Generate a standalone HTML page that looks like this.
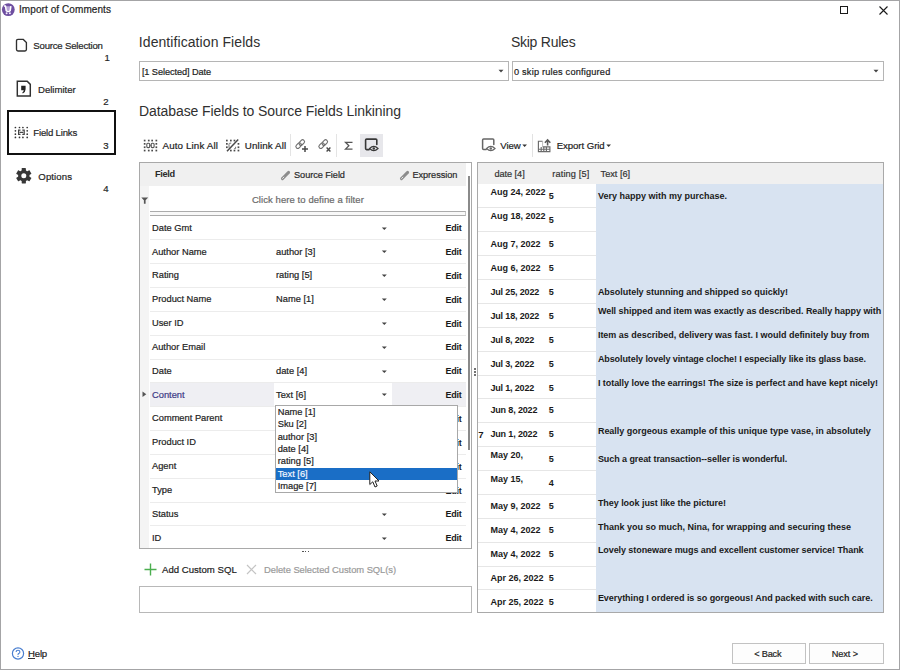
<!DOCTYPE html>
<html><head><meta charset="utf-8"><style>
html,body{margin:0;padding:0;}
body{width:900px;height:670px;position:relative;overflow:hidden;background:#fff;font-family:"Liberation Sans",sans-serif;}
.t{position:absolute;white-space:nowrap;}
svg{overflow:visible}
</style></head><body>
<div style="position:absolute;left:0px;top:0px;width:900px;height:670px;box-sizing:border-box;border:1px solid #a4a4a6"></div>
<svg style="position:absolute;left:2px;top:3px;" width="14" height="14" viewBox="0 0 14 14"><circle cx="6.3" cy="6.6" r="6.4" fill="#6e4ea0"/><path d="M3.6 3.2 L8.9 3.2 L8.1 7.4 L4.3 7.4 Z" fill="#b8a4d8"/><path d="M1.9 3.1 H3.5 L4.2 7.6 Q6.2 9.4 8.2 7.6 L8.9 3.1" fill="none" stroke="#fff" stroke-width="1.5" stroke-linejoin="round"/><circle cx="4.6" cy="10.2" r="1" fill="#f4eeff"/><circle cx="7.9" cy="10.2" r="1" fill="#f4eeff"/></svg>
<div class="t" style="left:19.00px;top:4.80px;font-size:10px;line-height:10px;-webkit-text-stroke:0.2px #1e1e1e;color:#1e1e1e;letter-spacing:0.079px;">Import of Comments</div>
<div style="position:absolute;left:840px;top:6px;width:8px;height:8px;box-sizing:border-box;border:1px solid #1a1a1a"></div>
<svg style="position:absolute;left:879px;top:6px;" width="10" height="9" viewBox="0 0 10 9"><path d="M0.5 0.5 L8.5 8.5 M8.5 0.5 L0.5 8.5" stroke="#1a1a1a" stroke-width="1.1"/></svg>
<svg style="position:absolute;left:15px;top:38px;" width="13" height="15" viewBox="0 0 13 15"><path d="M3 1.4 H8.3 L11.4 4.5 V11.6 Q11.4 13 10 13 H3 Q1.5 13 1.5 11.6 V2.8 Q1.5 1.4 3 1.4 Z" fill="none" stroke="#303030" stroke-width="1.35"/></svg>
<div class="t" style="left:33.30px;top:41.23px;font-size:9.6px;line-height:9.6px;-webkit-text-stroke:0.2px #262626;color:#262626;letter-spacing:-0.198px;">Source Selection</div>
<div class="t" style="left:104.50px;top:53.23px;font-size:9.6px;line-height:9.6px;-webkit-text-stroke:0.2px #262626;color:#262626;">1</div>
<svg style="position:absolute;left:16px;top:80px;" width="16" height="17" viewBox="0 0 16 17"><path d="M1.3 1.3 H11.2 L14.3 4.4 V15.9 H1.3 Z" fill="none" stroke="#303030" stroke-width="1.45" stroke-linejoin="miter"/><path d="M5.2 5.8 H9.6 V9.2 Q9.6 12 6.8 13.4 L6.3 12.6 Q7.6 11.6 7.8 10.2 H5.2 Z" fill="#222"/></svg>
<div class="t" style="left:38.00px;top:84.53px;font-size:9.6px;line-height:9.6px;-webkit-text-stroke:0.2px #262626;color:#262626;letter-spacing:-0.019px;">Delimiter</div>
<div class="t" style="left:103.30px;top:97.23px;font-size:9.6px;line-height:9.6px;-webkit-text-stroke:0.2px #262626;color:#262626;">2</div>
<div style="position:absolute;left:7px;top:110px;width:109px;height:45px;box-sizing:border-box;border:2px solid #111"></div>
<svg style="position:absolute;left:14px;top:126px;" width="15" height="13" viewBox="0 0 15 13"><circle cx="1.4" cy="1.5" r="0.85" fill="#333"/><circle cx="1.4" cy="11.4" r="0.85" fill="#333"/><circle cx="5.5" cy="1.5" r="0.85" fill="#333"/><circle cx="5.5" cy="11.4" r="0.85" fill="#333"/><circle cx="8.9" cy="1.5" r="0.85" fill="#333"/><circle cx="8.9" cy="11.4" r="0.85" fill="#333"/><circle cx="13.2" cy="1.5" r="0.85" fill="#333"/><circle cx="13.2" cy="11.4" r="0.85" fill="#333"/><circle cx="1.4" cy="4.8" r="0.85" fill="#333"/><circle cx="1.4" cy="8.2" r="0.85" fill="#333"/><circle cx="13.2" cy="4.8" r="0.85" fill="#333"/><circle cx="13.2" cy="8.2" r="0.85" fill="#333"/><path d="M6.5 4.2 H4.6 V8.4 H6.5 M8.3 4.2 H10.2 V8.4 H8.3 M5.6 6.3 H9.2" fill="none" stroke="#444" stroke-width="1.2"/></svg>
<div class="t" style="left:33.30px;top:128.43px;font-size:9.6px;line-height:9.6px;-webkit-text-stroke:0.2px #262626;color:#262626;letter-spacing:-0.198px;">Field Links</div>
<div class="t" style="left:103.20px;top:140.53px;font-size:9.6px;line-height:9.6px;-webkit-text-stroke:0.2px #262626;color:#262626;">3</div>
<svg style="position:absolute;left:16px;top:168px;" width="16" height="16" viewBox="0 0 16 16"><g transform="translate(7.8,7.8)" fill="#383838"><rect x="-2.1" y="-7.7" width="4.2" height="4" rx="0.4" transform="rotate(0)"/><rect x="-2.1" y="-7.7" width="4.2" height="4" rx="0.4" transform="rotate(60)"/><rect x="-2.1" y="-7.7" width="4.2" height="4" rx="0.4" transform="rotate(120)"/><rect x="-2.1" y="-7.7" width="4.2" height="4" rx="0.4" transform="rotate(180)"/><rect x="-2.1" y="-7.7" width="4.2" height="4" rx="0.4" transform="rotate(240)"/><rect x="-2.1" y="-7.7" width="4.2" height="4" rx="0.4" transform="rotate(300)"/><circle r="5.7"/></g><circle cx="7.8" cy="7.8" r="2.5" fill="#fff"/></svg>
<div class="t" style="left:38.30px;top:172.13px;font-size:9.6px;line-height:9.6px;-webkit-text-stroke:0.2px #262626;color:#262626;letter-spacing:0.117px;">Options</div>
<div class="t" style="left:103.20px;top:184.23px;font-size:9.6px;line-height:9.6px;-webkit-text-stroke:0.2px #262626;color:#262626;">4</div>
<div class="t" style="left:138.80px;top:34.68px;font-size:14px;line-height:14px;color:#303030;letter-spacing:0.079px;">Identification Fields</div>
<div class="t" style="left:510.90px;top:34.68px;font-size:14px;line-height:14px;color:#303030;letter-spacing:-0.242px;">Skip Rules</div>
<div class="t" style="left:139.00px;top:103.68px;font-size:14px;line-height:14px;color:#303030;letter-spacing:-0.080px;">Database Fields to Source Fields Linkining</div>
<div style="position:absolute;left:139px;top:61px;width:370px;height:20px;box-sizing:border-box;border:1px solid #b5b5b5;background:#fff"></div>
<div class="t" style="left:141.90px;top:68.06px;font-size:9.2px;line-height:9.2px;-webkit-text-stroke:0.2px #222;color:#222;letter-spacing:-0.081px;">[1 Selected] Date</div>
<svg style="position:absolute;left:498px;top:69px;" width="7" height="5" viewBox="0 0 7 5"><path d="M0.5 0.8 H5.5 L3 3.6 Z" fill="#444"/></svg>
<div style="position:absolute;left:512px;top:61px;width:372px;height:20px;box-sizing:border-box;border:1px solid #b5b5b5;background:#fff"></div>
<div class="t" style="left:514.00px;top:68.06px;font-size:9.2px;line-height:9.2px;-webkit-text-stroke:0.2px #222;color:#222;letter-spacing:0.198px;">0 skip rules configured</div>
<svg style="position:absolute;left:873px;top:69px;" width="7" height="5" viewBox="0 0 7 5"><path d="M0.5 0.8 H5.5 L3 3.6 Z" fill="#444"/></svg>
<svg style="position:absolute;left:143px;top:139px;" width="16" height="14" viewBox="0 0 16 14"><rect x="0.8" y="0.7" width="1.7" height="1.7" fill="#4a4a4a"/><rect x="0.8" y="4.0" width="1.7" height="1.7" fill="#4a4a4a"/><rect x="0.8" y="7.4" width="1.7" height="1.7" fill="#4a4a4a"/><rect x="0.8" y="10.7" width="1.7" height="1.7" fill="#4a4a4a"/><rect x="4.9" y="0.7" width="1.7" height="1.7" fill="#4a4a4a"/><rect x="4.9" y="10.7" width="1.7" height="1.7" fill="#4a4a4a"/><rect x="8.3" y="0.7" width="1.7" height="1.7" fill="#4a4a4a"/><rect x="8.3" y="10.7" width="1.7" height="1.7" fill="#4a4a4a"/><rect x="12.5" y="0.7" width="1.7" height="1.7" fill="#4a4a4a"/><rect x="12.5" y="4.0" width="1.7" height="1.7" fill="#4a4a4a"/><rect x="12.5" y="7.4" width="1.7" height="1.7" fill="#4a4a4a"/><rect x="12.5" y="10.7" width="1.7" height="1.7" fill="#4a4a4a"/><rect x="3.8" y="4.2" width="2.9" height="4.4" rx="1" fill="none" stroke="#555" stroke-width="1.1"/><rect x="8.2" y="4.2" width="2.9" height="4.4" rx="1" fill="none" stroke="#555" stroke-width="1.1"/><path d="M6.5 6.4 H8.4" stroke="#666" stroke-width="0.9"/></svg>
<div class="t" style="left:162.50px;top:140.87px;font-size:9.8px;line-height:9.8px;-webkit-text-stroke:0.2px #222;color:#222;letter-spacing:0.121px;">Auto Link All</div>
<svg style="position:absolute;left:225px;top:138px;" width="16" height="15" viewBox="0 0 16 15"><rect x="1.0" y="1.7" width="1.7" height="1.7" fill="#4a4a4a"/><rect x="1.0" y="5.0" width="1.7" height="1.7" fill="#4a4a4a"/><rect x="1.0" y="8.4" width="1.7" height="1.7" fill="#4a4a4a"/><rect x="5.0" y="1.7" width="1.7" height="1.7" fill="#4a4a4a"/><rect x="5.0" y="11.7" width="1.7" height="1.7" fill="#4a4a4a"/><rect x="8.6" y="1.7" width="1.7" height="1.7" fill="#4a4a4a"/><rect x="8.6" y="11.7" width="1.7" height="1.7" fill="#4a4a4a"/><rect x="12.6" y="5.0" width="1.7" height="1.7" fill="#4a4a4a"/><rect x="12.6" y="8.4" width="1.7" height="1.7" fill="#4a4a4a"/><rect x="12.6" y="11.7" width="1.7" height="1.7" fill="#4a4a4a"/><path d="M4 9.8 L4 6.2 Q4 5.2 5 5.2 L6.2 5.2" fill="none" stroke="#777" stroke-width="1"/><path d="M9.2 10.6 L10.6 10.6 L10.6 8.8" fill="none" stroke="#777" stroke-width="1"/><path d="M2 13.2 L13.2 1.6" stroke="#4a4a4a" stroke-width="1.5"/></svg>
<div class="t" style="left:244.80px;top:140.87px;font-size:9.8px;line-height:9.8px;-webkit-text-stroke:0.2px #222;color:#222;letter-spacing:0.129px;">Unlink All</div>
<div style="position:absolute;left:290px;top:134px;width:1px;height:22px;background:#e4e4e4"></div>
<svg style="position:absolute;left:295px;top:139px;" width="14" height="14" viewBox="0 0 14 14"><g transform="translate(5.2,5.1) rotate(-45)" fill="none" stroke="#707070" stroke-width="1.1"><rect x="-5.3" y="-1.9" width="6.2" height="3.8" rx="1.9"/><rect x="-0.9" y="-1.9" width="6.2" height="3.8" rx="1.9"/></g><path d="M10 7 V13 M7 10 H13" stroke="#4a4a4a" stroke-width="1.5"/></svg>
<svg style="position:absolute;left:318px;top:139px;" width="14" height="14" viewBox="0 0 14 14"><g transform="translate(5.2,5.1) rotate(-45)" fill="none" stroke="#707070" stroke-width="1.1"><rect x="-5.3" y="-1.9" width="6.2" height="3.8" rx="1.9"/><rect x="-0.9" y="-1.9" width="6.2" height="3.8" rx="1.9"/></g><path d="M8.6 8.6 L12.4 12.4 M12.4 8.6 L8.6 12.4" stroke="#4a4a4a" stroke-width="1.4"/></svg>
<div style="position:absolute;left:336px;top:134px;width:1px;height:23px;background:#e4e4e4"></div>
<svg style="position:absolute;left:344px;top:141px;" width="10" height="10" viewBox="0 0 10 10"><path d="M8.5 1.3 H1.5 L4.9 4.7 L1.5 8.1 H8.5" fill="none" stroke="#555" stroke-width="1.25" stroke-linejoin="miter"/></svg>
<div style="position:absolute;left:360px;top:134px;width:23px;height:23px;background:#e7e7eb"></div>
<svg style="position:absolute;left:364px;top:138px;" width="16" height="15" viewBox="0 0 16 15"><path d="M5.2 11.6 H2.6 Q1.6 11.6 1.6 10.6 V2.1 Q1.6 1.1 2.6 1.1 H11.8 Q12.8 1.1 12.8 2.1 V6.4" fill="none" stroke="#383838" stroke-width="1.6" stroke-linecap="round"/><path d="M5.6 10.5 Q9.8 6.4 14 10.5 Q9.8 14.6 5.6 10.5 Z" fill="none" stroke="#383838" stroke-width="1.2"/><circle cx="9.8" cy="10.5" r="1.2" fill="#383838"/></svg>
<div style="position:absolute;left:139px;top:162px;width:333px;height:387px;box-sizing:border-box;border:1px solid #a9a9a9;background:#fff"></div>
<div style="position:absolute;left:140px;top:163px;width:326px;height:23px;background:#f0f0f0"></div>
<div style="position:absolute;left:140px;top:186px;width:9px;height:362px;background:#f4f4f4"></div>
<div class="t" style="left:155.00px;top:170.46px;font-size:9.2px;line-height:9.2px;font-weight:bold;color:#2a2a2a;letter-spacing:-0.333px;">Field</div>
<svg style="position:absolute;left:280px;top:170px;" width="10" height="10" viewBox="0 0 10 10"><path d="M2.4 8.6 L8.6 2.4" stroke="#8c8c8c" stroke-width="2.9" stroke-linecap="round"/><path d="M2.6 8.4 L3.9 7.1" stroke="#f4f4f4" stroke-width="0.9" stroke-linecap="round"/></svg>
<div class="t" style="left:294.00px;top:170.76px;font-size:9.2px;line-height:9.2px;-webkit-text-stroke:0.2px #2a2a2a;color:#2a2a2a;letter-spacing:-0.054px;">Source Field</div>
<svg style="position:absolute;left:399px;top:170px;" width="10" height="10" viewBox="0 0 10 10"><path d="M2.4 8.6 L8.6 2.4" stroke="#8c8c8c" stroke-width="2.9" stroke-linecap="round"/><path d="M2.6 8.4 L3.9 7.1" stroke="#f4f4f4" stroke-width="0.9" stroke-linecap="round"/></svg>
<div class="t" style="left:412.50px;top:170.76px;font-size:9.2px;line-height:9.2px;-webkit-text-stroke:0.2px #2a2a2a;color:#2a2a2a;letter-spacing:-0.071px;">Expression</div>
<div class="t" style="left:251.90px;top:195.12px;font-size:9.5px;line-height:9.5px;-webkit-text-stroke:0.2px #6a6a6a;color:#6a6a6a;letter-spacing:0.075px;">Click here to define a filter</div>
<svg style="position:absolute;left:141px;top:197px;" width="8" height="7" viewBox="0 0 8 7"><path d="M0.3 0.5 H7.2 L4.6 3.2 V6.8 H2.9 V3.2 Z" fill="#555"/></svg>
<div style="position:absolute;left:150px;top:211px;width:316px;height:5px;box-sizing:border-box;border-top:1px solid #ababab;border-bottom:1px solid #ababab;border-right:1px solid #c4c4c4;background:#f8f8f8"></div>
<div class="t" style="left:152.00px;top:223.68px;font-size:9.3px;line-height:9.3px;-webkit-text-stroke:0.2px #222;color:#222;">Date Gmt</div>
<svg style="position:absolute;left:381px;top:226.5px;" width="7" height="4" viewBox="0 0 7 4"><path d="M0.8 0.5 H5.8 L3.3 3 Z" fill="#444"/></svg>
<div class="t" style="left:445.40px;top:224.23px;font-size:9px;line-height:9px;font-weight:bold;color:#1a1a1a;letter-spacing:-0.249px;">Edit</div>
<div style="position:absolute;left:150px;top:239.25px;width:316px;height:1px;background:#ececec"></div>
<div class="t" style="left:152.00px;top:247.53px;font-size:9.3px;line-height:9.3px;-webkit-text-stroke:0.2px #222;color:#222;">Author Name</div>
<div class="t" style="left:276.00px;top:247.53px;font-size:9.3px;line-height:9.3px;-webkit-text-stroke:0.2px #222;color:#222;">author [3]</div>
<svg style="position:absolute;left:381px;top:250.35px;" width="7" height="4" viewBox="0 0 7 4"><path d="M0.8 0.5 H5.8 L3.3 3 Z" fill="#444"/></svg>
<div class="t" style="left:445.40px;top:248.08px;font-size:9px;line-height:9px;font-weight:bold;color:#1a1a1a;letter-spacing:-0.249px;">Edit</div>
<div style="position:absolute;left:150px;top:263.10px;width:316px;height:1px;background:#ececec"></div>
<div class="t" style="left:152.00px;top:271.38px;font-size:9.3px;line-height:9.3px;-webkit-text-stroke:0.2px #222;color:#222;">Rating</div>
<div class="t" style="left:276.00px;top:271.38px;font-size:9.3px;line-height:9.3px;-webkit-text-stroke:0.2px #222;color:#222;">rating [5]</div>
<svg style="position:absolute;left:381px;top:274.2px;" width="7" height="4" viewBox="0 0 7 4"><path d="M0.8 0.5 H5.8 L3.3 3 Z" fill="#444"/></svg>
<div class="t" style="left:445.40px;top:271.93px;font-size:9px;line-height:9px;font-weight:bold;color:#1a1a1a;letter-spacing:-0.249px;">Edit</div>
<div style="position:absolute;left:150px;top:286.95px;width:316px;height:1px;background:#ececec"></div>
<div class="t" style="left:152.00px;top:295.23px;font-size:9.3px;line-height:9.3px;-webkit-text-stroke:0.2px #222;color:#222;">Product Name</div>
<div class="t" style="left:276.00px;top:295.23px;font-size:9.3px;line-height:9.3px;-webkit-text-stroke:0.2px #222;color:#222;">Name [1]</div>
<svg style="position:absolute;left:381px;top:298.05px;" width="7" height="4" viewBox="0 0 7 4"><path d="M0.8 0.5 H5.8 L3.3 3 Z" fill="#444"/></svg>
<div class="t" style="left:445.40px;top:295.78px;font-size:9px;line-height:9px;font-weight:bold;color:#1a1a1a;letter-spacing:-0.249px;">Edit</div>
<div style="position:absolute;left:150px;top:310.80px;width:316px;height:1px;background:#ececec"></div>
<div class="t" style="left:152.00px;top:319.08px;font-size:9.3px;line-height:9.3px;-webkit-text-stroke:0.2px #222;color:#222;">User ID</div>
<svg style="position:absolute;left:381px;top:321.9px;" width="7" height="4" viewBox="0 0 7 4"><path d="M0.8 0.5 H5.8 L3.3 3 Z" fill="#444"/></svg>
<div class="t" style="left:445.40px;top:319.63px;font-size:9px;line-height:9px;font-weight:bold;color:#1a1a1a;letter-spacing:-0.249px;">Edit</div>
<div style="position:absolute;left:150px;top:334.65px;width:316px;height:1px;background:#ececec"></div>
<div class="t" style="left:152.00px;top:342.93px;font-size:9.3px;line-height:9.3px;-webkit-text-stroke:0.2px #222;color:#222;">Author Email</div>
<svg style="position:absolute;left:381px;top:345.75px;" width="7" height="4" viewBox="0 0 7 4"><path d="M0.8 0.5 H5.8 L3.3 3 Z" fill="#444"/></svg>
<div class="t" style="left:445.40px;top:343.48px;font-size:9px;line-height:9px;font-weight:bold;color:#1a1a1a;letter-spacing:-0.249px;">Edit</div>
<div style="position:absolute;left:150px;top:358.50px;width:316px;height:1px;background:#ececec"></div>
<div class="t" style="left:152.00px;top:366.78px;font-size:9.3px;line-height:9.3px;-webkit-text-stroke:0.2px #222;color:#222;">Date</div>
<div class="t" style="left:276.00px;top:366.78px;font-size:9.3px;line-height:9.3px;-webkit-text-stroke:0.2px #222;color:#222;">date [4]</div>
<svg style="position:absolute;left:381px;top:369.6px;" width="7" height="4" viewBox="0 0 7 4"><path d="M0.8 0.5 H5.8 L3.3 3 Z" fill="#444"/></svg>
<div class="t" style="left:445.40px;top:367.33px;font-size:9px;line-height:9px;font-weight:bold;color:#1a1a1a;letter-spacing:-0.249px;">Edit</div>
<div style="position:absolute;left:150px;top:382.45px;width:316px;height:23.85px;background:#efeff3"></div>
<div style="position:absolute;left:274px;top:382.45px;width:118px;height:23.85px;background:#fff"></div>
<div style="position:absolute;left:150px;top:382.35px;width:316px;height:1px;background:#ececec"></div>
<div class="t" style="left:152.00px;top:390.63px;font-size:9.3px;line-height:9.3px;-webkit-text-stroke:0.2px #3d3a86;color:#3d3a86;">Content</div>
<div class="t" style="left:276.00px;top:390.63px;font-size:9.3px;line-height:9.3px;-webkit-text-stroke:0.2px #222;color:#222;">Text [6]</div>
<svg style="position:absolute;left:381px;top:393.45000000000005px;" width="7" height="4" viewBox="0 0 7 4"><path d="M0.8 0.5 H5.8 L3.3 3 Z" fill="#444"/></svg>
<div class="t" style="left:445.40px;top:391.18px;font-size:9px;line-height:9px;font-weight:bold;color:#1a1a1a;letter-spacing:-0.249px;">Edit</div>
<div style="position:absolute;left:150px;top:406.20px;width:316px;height:1px;background:#ececec"></div>
<div class="t" style="left:152.00px;top:414.48px;font-size:9.3px;line-height:9.3px;-webkit-text-stroke:0.2px #222;color:#222;">Comment Parent</div>
<svg style="position:absolute;left:381px;top:417.3px;" width="7" height="4" viewBox="0 0 7 4"><path d="M0.8 0.5 H5.8 L3.3 3 Z" fill="#444"/></svg>
<div class="t" style="left:445.40px;top:415.03px;font-size:9px;line-height:9px;font-weight:bold;color:#1a1a1a;letter-spacing:-0.249px;">Edit</div>
<div style="position:absolute;left:150px;top:430.05px;width:316px;height:1px;background:#ececec"></div>
<div class="t" style="left:152.00px;top:438.33px;font-size:9.3px;line-height:9.3px;-webkit-text-stroke:0.2px #222;color:#222;">Product ID</div>
<svg style="position:absolute;left:381px;top:441.15px;" width="7" height="4" viewBox="0 0 7 4"><path d="M0.8 0.5 H5.8 L3.3 3 Z" fill="#444"/></svg>
<div class="t" style="left:445.40px;top:438.88px;font-size:9px;line-height:9px;font-weight:bold;color:#1a1a1a;letter-spacing:-0.249px;">Edit</div>
<div style="position:absolute;left:150px;top:453.90px;width:316px;height:1px;background:#ececec"></div>
<div class="t" style="left:152.00px;top:462.18px;font-size:9.3px;line-height:9.3px;-webkit-text-stroke:0.2px #222;color:#222;">Agent</div>
<svg style="position:absolute;left:381px;top:465.0px;" width="7" height="4" viewBox="0 0 7 4"><path d="M0.8 0.5 H5.8 L3.3 3 Z" fill="#444"/></svg>
<div class="t" style="left:445.40px;top:462.73px;font-size:9px;line-height:9px;font-weight:bold;color:#1a1a1a;letter-spacing:-0.249px;">Edit</div>
<div style="position:absolute;left:150px;top:477.75px;width:316px;height:1px;background:#ececec"></div>
<div class="t" style="left:152.00px;top:486.03px;font-size:9.3px;line-height:9.3px;-webkit-text-stroke:0.2px #222;color:#222;">Type</div>
<svg style="position:absolute;left:381px;top:488.85px;" width="7" height="4" viewBox="0 0 7 4"><path d="M0.8 0.5 H5.8 L3.3 3 Z" fill="#444"/></svg>
<div class="t" style="left:445.40px;top:486.58px;font-size:9px;line-height:9px;font-weight:bold;color:#1a1a1a;letter-spacing:-0.249px;">Edit</div>
<div style="position:absolute;left:150px;top:501.60px;width:316px;height:1px;background:#ececec"></div>
<div class="t" style="left:152.00px;top:509.88px;font-size:9.3px;line-height:9.3px;-webkit-text-stroke:0.2px #222;color:#222;">Status</div>
<svg style="position:absolute;left:381px;top:512.7px;" width="7" height="4" viewBox="0 0 7 4"><path d="M0.8 0.5 H5.8 L3.3 3 Z" fill="#444"/></svg>
<div class="t" style="left:445.40px;top:510.43px;font-size:9px;line-height:9px;font-weight:bold;color:#1a1a1a;letter-spacing:-0.249px;">Edit</div>
<div style="position:absolute;left:150px;top:525.45px;width:316px;height:1px;background:#ececec"></div>
<div class="t" style="left:152.00px;top:533.73px;font-size:9.3px;line-height:9.3px;-webkit-text-stroke:0.2px #222;color:#222;">ID</div>
<svg style="position:absolute;left:381px;top:536.55px;" width="7" height="4" viewBox="0 0 7 4"><path d="M0.8 0.5 H5.8 L3.3 3 Z" fill="#444"/></svg>
<div class="t" style="left:445.40px;top:534.28px;font-size:9px;line-height:9px;font-weight:bold;color:#1a1a1a;letter-spacing:-0.249px;">Edit</div>
<svg style="position:absolute;left:142px;top:391px;" width="5" height="7" viewBox="0 0 5 7"><path d="M0.5 0.5 L4.3 3.2 L0.5 6 Z" fill="#555"/></svg>
<div style="position:absolute;left:466px;top:163px;width:5px;height:385px;background:#fff"></div>
<div style="position:absolute;left:468px;top:176px;width:2px;height:274px;background:#8a8a8a"></div>
<div style="position:absolute;left:275px;top:405px;width:183px;height:88px;box-sizing:border-box;border:1px solid #a8a8a8;background:#fff"></div>
<div class="t" style="left:277.70px;top:408.08px;font-size:9.3px;line-height:9.3px;-webkit-text-stroke:0.2px #222;color:#222;">Name [1]</div>
<div class="t" style="left:277.70px;top:420.36px;font-size:9.3px;line-height:9.3px;-webkit-text-stroke:0.2px #222;color:#222;">Sku [2]</div>
<div class="t" style="left:277.70px;top:432.64px;font-size:9.3px;line-height:9.3px;-webkit-text-stroke:0.2px #222;color:#222;">author [3]</div>
<div class="t" style="left:277.70px;top:444.92px;font-size:9.3px;line-height:9.3px;-webkit-text-stroke:0.2px #222;color:#222;">date [4]</div>
<div class="t" style="left:277.70px;top:457.20px;font-size:9.3px;line-height:9.3px;-webkit-text-stroke:0.2px #222;color:#222;">rating [5]</div>
<div style="position:absolute;left:276px;top:468px;width:181px;height:12px;background:#1a6ec6"></div>
<div class="t" style="left:277.70px;top:470.18px;font-size:9.3px;line-height:9.3px;-webkit-text-stroke:0.2px #f4f8ff;color:#f4f8ff;">Text [6]</div>
<div class="t" style="left:277.70px;top:481.76px;font-size:9.3px;line-height:9.3px;-webkit-text-stroke:0.2px #222;color:#222;">Image [7]</div>
<svg style="position:absolute;left:369px;top:471px;" width="12" height="18" viewBox="0 0 12 18"><path d="M0.8 0.8 L0.8 13.5 L3.8 10.8 L6 16 L8.2 15 L6 10 L10 10 Z" fill="#fff" stroke="#222" stroke-width="1"/></svg>
<div style="position:absolute;left:302px;top:550.8px;width:1.5px;height:1.5px;background:#555"></div>
<div style="position:absolute;left:304.8px;top:550.8px;width:1.5px;height:1.5px;background:#555"></div>
<div style="position:absolute;left:307.6px;top:550.8px;width:1.5px;height:1.5px;background:#555"></div>
<svg style="position:absolute;left:144px;top:563px;" width="13" height="13" viewBox="0 0 13 13"><path d="M6.5 0.5 V12.5 M0.5 6.5 H12.5" stroke="#4bae4f" stroke-width="1.4"/></svg>
<div class="t" style="left:162.00px;top:564.53px;font-size:9.6px;line-height:9.6px;-webkit-text-stroke:0.2px #222;color:#222;letter-spacing:0.007px;">Add Custom SQL</div>
<svg style="position:absolute;left:246px;top:564px;" width="11" height="11" viewBox="0 0 11 11"><path d="M1 1 L10 10 M10 1 L1 10" stroke="#c4c4c4" stroke-width="1.2"/></svg>
<div class="t" style="left:264.00px;top:564.60px;font-size:9.4px;line-height:9.4px;-webkit-text-stroke:0.2px #9a9a9a;color:#9a9a9a;letter-spacing:-0.046px;">Delete Selected Custom SQL(s)</div>
<div style="position:absolute;left:139px;top:586px;width:333px;height:27px;box-sizing:border-box;border:1px solid #b8b8b8;background:#fff"></div>
<div style="position:absolute;left:474px;top:368px;width:1.6px;height:1.6px;background:#444;border-radius:1px"></div>
<div style="position:absolute;left:474px;top:371px;width:1.6px;height:1.6px;background:#444;border-radius:1px"></div>
<div style="position:absolute;left:474px;top:374px;width:1.6px;height:1.6px;background:#444;border-radius:1px"></div>
<svg style="position:absolute;left:481px;top:138px;" width="16" height="15" viewBox="0 0 16 15"><path d="M5.2 11.6 H2.6 Q1.6 11.6 1.6 10.6 V2.1 Q1.6 1.1 2.6 1.1 H11.8 Q12.8 1.1 12.8 2.1 V6.4" fill="none" stroke="#666" stroke-width="1.5" stroke-linecap="round"/><path d="M5.6 10.5 Q9.8 6.4 14 10.5 Q9.8 14.6 5.6 10.5 Z" fill="none" stroke="#666" stroke-width="1.2"/><circle cx="9.8" cy="10.5" r="1.2" fill="#666"/></svg>
<div class="t" style="left:500.30px;top:141.23px;font-size:9.6px;line-height:9.6px;-webkit-text-stroke:0.2px #222;color:#222;letter-spacing:-0.083px;">View</div>
<svg style="position:absolute;left:522px;top:144px;" width="6" height="4" viewBox="0 0 6 4"><path d="M0.3 0.5 H5 L2.65 3 Z" fill="#333"/></svg>
<div style="position:absolute;left:532px;top:134px;width:1px;height:23px;background:#e2e2e2"></div>
<svg style="position:absolute;left:537px;top:138px;" width="15" height="15" viewBox="0 0 15 15"><path d="M5.6 3.2 H1.4 V13.6 H12.9 V8.9 H5.6 M1.4 11.2 H12.9 M4.2 8.9 V13.6 M6.8 8.9 V13.6 M9.4 8.9 V13.6" fill="none" stroke="#6a6a6a" stroke-width="1.15"/><path d="M5.6 3.2 V8.9" stroke="#aaa" stroke-width="0.8"/><path d="M10.6 7.6 V2 M7.9 4.7 L10.6 1.8 L13.3 4.7" fill="none" stroke="#5a5a5a" stroke-width="1.6"/></svg>
<div class="t" style="left:556.70px;top:141.23px;font-size:9.6px;line-height:9.6px;-webkit-text-stroke:0.2px #222;color:#222;letter-spacing:-0.050px;">Export Grid</div>
<svg style="position:absolute;left:606px;top:144px;" width="6" height="4" viewBox="0 0 6 4"><path d="M0.3 0.5 H5 L2.65 3 Z" fill="#333"/></svg>
<div style="position:absolute;left:477px;top:162px;width:407px;height:451px;box-sizing:border-box;border:1px solid #a9a9a9;background:#fff"></div>
<div style="position:absolute;left:478px;top:163px;width:405px;height:21px;background:#f0f0f0"></div>
<div style="position:absolute;left:596px;top:184px;width:287px;height:428px;background:#d8e3f1"></div>
<div class="t" style="left:494.40px;top:170.06px;font-size:9.2px;line-height:9.2px;-webkit-text-stroke:0.2px #333;color:#333;letter-spacing:-0.048px;">date [4]</div>
<div class="t" style="left:552.20px;top:170.06px;font-size:9.2px;line-height:9.2px;-webkit-text-stroke:0.2px #333;color:#333;letter-spacing:0.160px;">rating [5]</div>
<div class="t" style="left:600.60px;top:170.06px;font-size:9.2px;line-height:9.2px;-webkit-text-stroke:0.2px #333;color:#333;letter-spacing:-0.019px;">Text [6]</div>
<div style="position:absolute;left:478px;top:207.40px;width:118px;height:1px;background:#e6e6e6"></div>
<div class="t" style="left:490.40px;top:187.53px;font-size:9px;line-height:9px;font-weight:bold;color:#1a1a1a;letter-spacing:0.000px;">Aug 24, 2022</div>
<div class="t" style="left:548.70px;top:191.53px;font-size:9px;line-height:9px;font-weight:bold;color:#1a1a1a;">5</div>
<div class="t" style="left:597.90px;top:191.53px;font-size:9px;line-height:9px;font-weight:bold;color:#1a1a1a;letter-spacing:-0.001px;">Very happy with my purchase.</div>
<div style="position:absolute;left:478px;top:231.28px;width:118px;height:1px;background:#e6e6e6"></div>
<div class="t" style="left:490.40px;top:211.53px;font-size:9px;line-height:9px;font-weight:bold;color:#1a1a1a;letter-spacing:0.000px;">Aug 18, 2022</div>
<div class="t" style="left:548.70px;top:215.53px;font-size:9px;line-height:9px;font-weight:bold;color:#1a1a1a;">5</div>
<div style="position:absolute;left:478px;top:255.15px;width:118px;height:1px;background:#e6e6e6"></div>
<div class="t" style="left:490.40px;top:239.93px;font-size:9px;line-height:9px;font-weight:bold;color:#1a1a1a;letter-spacing:0.000px;">Aug 7, 2022</div>
<div class="t" style="left:548.70px;top:239.93px;font-size:9px;line-height:9px;font-weight:bold;color:#1a1a1a;">5</div>
<div style="position:absolute;left:478px;top:279.02px;width:118px;height:1px;background:#e6e6e6"></div>
<div class="t" style="left:490.40px;top:263.83px;font-size:9px;line-height:9px;font-weight:bold;color:#1a1a1a;letter-spacing:0.000px;">Aug 6, 2022</div>
<div class="t" style="left:548.70px;top:263.83px;font-size:9px;line-height:9px;font-weight:bold;color:#1a1a1a;">5</div>
<div style="position:absolute;left:478px;top:302.90px;width:118px;height:1px;background:#e6e6e6"></div>
<div class="t" style="left:490.40px;top:287.73px;font-size:9px;line-height:9px;font-weight:bold;color:#1a1a1a;letter-spacing:-0.150px;">Jul 25, 2022</div>
<div class="t" style="left:548.70px;top:287.73px;font-size:9px;line-height:9px;font-weight:bold;color:#1a1a1a;">5</div>
<div class="t" style="left:597.90px;top:288.23px;font-size:9px;line-height:9px;font-weight:bold;color:#1a1a1a;letter-spacing:-0.032px;">Absolutely stunning and shipped so quickly!</div>
<div style="position:absolute;left:478px;top:326.77px;width:118px;height:1px;background:#e6e6e6"></div>
<div class="t" style="left:490.40px;top:311.53px;font-size:9px;line-height:9px;font-weight:bold;color:#1a1a1a;letter-spacing:-0.150px;">Jul 18, 2022</div>
<div class="t" style="left:548.70px;top:311.53px;font-size:9px;line-height:9px;font-weight:bold;color:#1a1a1a;">5</div>
<div class="t" style="left:597.90px;top:307.33px;font-size:9px;line-height:9px;font-weight:bold;color:#1a1a1a;letter-spacing:-0.040px;">Well shipped and item was exactly as described. Really happy with</div>
<div style="position:absolute;left:478px;top:350.65px;width:118px;height:1px;background:#e6e6e6"></div>
<div class="t" style="left:490.40px;top:335.53px;font-size:9px;line-height:9px;font-weight:bold;color:#1a1a1a;letter-spacing:-0.164px;">Jul 8, 2022</div>
<div class="t" style="left:548.70px;top:335.53px;font-size:9px;line-height:9px;font-weight:bold;color:#1a1a1a;">5</div>
<div class="t" style="left:597.90px;top:331.23px;font-size:9px;line-height:9px;font-weight:bold;color:#1a1a1a;letter-spacing:-0.012px;">Item as described, delivery was fast. I would definitely buy from</div>
<div style="position:absolute;left:478px;top:374.52px;width:118px;height:1px;background:#e6e6e6"></div>
<div class="t" style="left:490.40px;top:359.53px;font-size:9px;line-height:9px;font-weight:bold;color:#1a1a1a;letter-spacing:-0.164px;">Jul 3, 2022</div>
<div class="t" style="left:548.70px;top:359.53px;font-size:9px;line-height:9px;font-weight:bold;color:#1a1a1a;">5</div>
<div class="t" style="left:597.90px;top:355.03px;font-size:9px;line-height:9px;font-weight:bold;color:#1a1a1a;letter-spacing:-0.091px;">Absolutely lovely vintage cloche! I especially like its glass base.</div>
<div style="position:absolute;left:478px;top:398.40px;width:118px;height:1px;background:#e6e6e6"></div>
<div class="t" style="left:490.40px;top:383.53px;font-size:9px;line-height:9px;font-weight:bold;color:#1a1a1a;letter-spacing:-0.164px;">Jul 1, 2022</div>
<div class="t" style="left:548.70px;top:383.53px;font-size:9px;line-height:9px;font-weight:bold;color:#1a1a1a;">5</div>
<div class="t" style="left:597.90px;top:379.03px;font-size:9px;line-height:9px;font-weight:bold;color:#1a1a1a;letter-spacing:-0.044px;">I totally love the earrings! The size is perfect and have kept nicely!</div>
<div style="position:absolute;left:478px;top:422.27px;width:118px;height:1px;background:#e6e6e6"></div>
<div class="t" style="left:490.40px;top:406.43px;font-size:9px;line-height:9px;font-weight:bold;color:#1a1a1a;letter-spacing:-0.145px;">Jun 8, 2022</div>
<div class="t" style="left:548.70px;top:406.43px;font-size:9px;line-height:9px;font-weight:bold;color:#1a1a1a;">5</div>
<div style="position:absolute;left:478px;top:446.15px;width:118px;height:1px;background:#e6e6e6"></div>
<div class="t" style="left:490.40px;top:430.33px;font-size:9px;line-height:9px;font-weight:bold;color:#1a1a1a;letter-spacing:-0.145px;">Jun 1, 2022</div>
<div class="t" style="left:548.70px;top:430.33px;font-size:9px;line-height:9px;font-weight:bold;color:#1a1a1a;">5</div>
<div class="t" style="left:597.90px;top:427.03px;font-size:9px;line-height:9px;font-weight:bold;color:#1a1a1a;letter-spacing:-0.012px;">Really gorgeous example of this unique type vase, in absolutely</div>
<div style="position:absolute;left:478px;top:470.02px;width:118px;height:1px;background:#e6e6e6"></div>
<div class="t" style="left:490.40px;top:450.83px;font-size:9px;line-height:9px;font-weight:bold;color:#1a1a1a;letter-spacing:0.000px;">May 20,</div>
<div class="t" style="left:548.70px;top:454.73px;font-size:9px;line-height:9px;font-weight:bold;color:#1a1a1a;">5</div>
<div class="t" style="left:597.90px;top:454.73px;font-size:9px;line-height:9px;font-weight:bold;color:#1a1a1a;letter-spacing:-0.072px;">Such a great transaction--seller is wonderful.</div>
<div style="position:absolute;left:478px;top:493.90px;width:118px;height:1px;background:#e6e6e6"></div>
<div class="t" style="left:490.40px;top:474.73px;font-size:9px;line-height:9px;font-weight:bold;color:#1a1a1a;letter-spacing:0.000px;">May 15,</div>
<div class="t" style="left:548.70px;top:478.63px;font-size:9px;line-height:9px;font-weight:bold;color:#1a1a1a;">4</div>
<div style="position:absolute;left:478px;top:517.77px;width:118px;height:1px;background:#e6e6e6"></div>
<div class="t" style="left:490.40px;top:501.93px;font-size:9px;line-height:9px;font-weight:bold;color:#1a1a1a;letter-spacing:0.000px;">May 9, 2022</div>
<div class="t" style="left:548.70px;top:501.93px;font-size:9px;line-height:9px;font-weight:bold;color:#1a1a1a;">5</div>
<div class="t" style="left:597.90px;top:498.63px;font-size:9px;line-height:9px;font-weight:bold;color:#1a1a1a;letter-spacing:-0.047px;">They look just like the picture!</div>
<div style="position:absolute;left:478px;top:541.65px;width:118px;height:1px;background:#e6e6e6"></div>
<div class="t" style="left:490.40px;top:525.83px;font-size:9px;line-height:9px;font-weight:bold;color:#1a1a1a;letter-spacing:0.000px;">May 4, 2022</div>
<div class="t" style="left:548.70px;top:525.83px;font-size:9px;line-height:9px;font-weight:bold;color:#1a1a1a;">5</div>
<div class="t" style="left:597.90px;top:522.53px;font-size:9px;line-height:9px;font-weight:bold;color:#1a1a1a;letter-spacing:0.003px;">Thank you so much, Nina, for wrapping and securing these</div>
<div style="position:absolute;left:478px;top:565.52px;width:118px;height:1px;background:#e6e6e6"></div>
<div class="t" style="left:490.40px;top:549.73px;font-size:9px;line-height:9px;font-weight:bold;color:#1a1a1a;letter-spacing:0.000px;">May 4, 2022</div>
<div class="t" style="left:548.70px;top:549.73px;font-size:9px;line-height:9px;font-weight:bold;color:#1a1a1a;">5</div>
<div class="t" style="left:597.90px;top:546.43px;font-size:9px;line-height:9px;font-weight:bold;color:#1a1a1a;letter-spacing:-0.076px;">Lovely stoneware mugs and excellent customer service! Thank</div>
<div style="position:absolute;left:478px;top:589.40px;width:118px;height:1px;background:#e6e6e6"></div>
<div class="t" style="left:490.40px;top:573.63px;font-size:9px;line-height:9px;font-weight:bold;color:#1a1a1a;letter-spacing:0.000px;">Apr 26, 2022</div>
<div class="t" style="left:548.70px;top:573.63px;font-size:9px;line-height:9px;font-weight:bold;color:#1a1a1a;">5</div>
<div class="t" style="left:490.40px;top:597.53px;font-size:9px;line-height:9px;font-weight:bold;color:#1a1a1a;letter-spacing:0.000px;">Apr 25, 2022</div>
<div class="t" style="left:548.70px;top:597.53px;font-size:9px;line-height:9px;font-weight:bold;color:#1a1a1a;">5</div>
<div class="t" style="left:597.90px;top:594.23px;font-size:9px;line-height:9px;font-weight:bold;color:#1a1a1a;letter-spacing:-0.048px;">Everything I ordered is so gorgeous! And packed with such care.</div>
<div class="t" style="left:478.20px;top:429.73px;font-size:9.6px;line-height:9.6px;font-weight:bold;color:#1a1a1a;">7</div>
<svg style="position:absolute;left:11px;top:647px;" width="14" height="14" viewBox="0 0 14 14"><circle cx="7" cy="6.5" r="5.6" fill="none" stroke="#4a7fd0" stroke-width="1.2"/><path d="M5.1 5 Q5.1 3.3 7 3.3 Q8.9 3.3 8.9 4.9 Q8.9 6 7.6 6.6 Q7 6.9 7 7.9" fill="none" stroke="#4a7fd0" stroke-width="1.1"/><circle cx="7" cy="9.4" r="0.7" fill="#4a7fd0"/></svg>
<div class="t" style="left:28.00px;top:649.23px;font-size:9.6px;line-height:9.6px;-webkit-text-stroke:0.2px #222;color:#222;letter-spacing:-0.186px;">Help</div>
<div style="position:absolute;left:28px;top:657.6px;width:7px;height:1px;background:#333"></div>
<div style="position:absolute;left:732px;top:643px;width:74px;height:21px;box-sizing:border-box;border:1px solid #c2c2c2;background:#fdfdfd"></div>
<div class="t" style="left:754.30px;top:649.56px;font-size:9.2px;line-height:9.2px;-webkit-text-stroke:0.2px #222;color:#222;letter-spacing:-0.230px;">&lt; Back</div>
<div style="position:absolute;left:809px;top:643px;width:75px;height:21px;box-sizing:border-box;border:1px solid #c2c2c2;background:#fdfdfd"></div>
<div class="t" style="left:831.70px;top:649.56px;font-size:9.2px;line-height:9.2px;-webkit-text-stroke:0.2px #222;color:#222;letter-spacing:-0.058px;">Next &gt;</div>
</body></html>
